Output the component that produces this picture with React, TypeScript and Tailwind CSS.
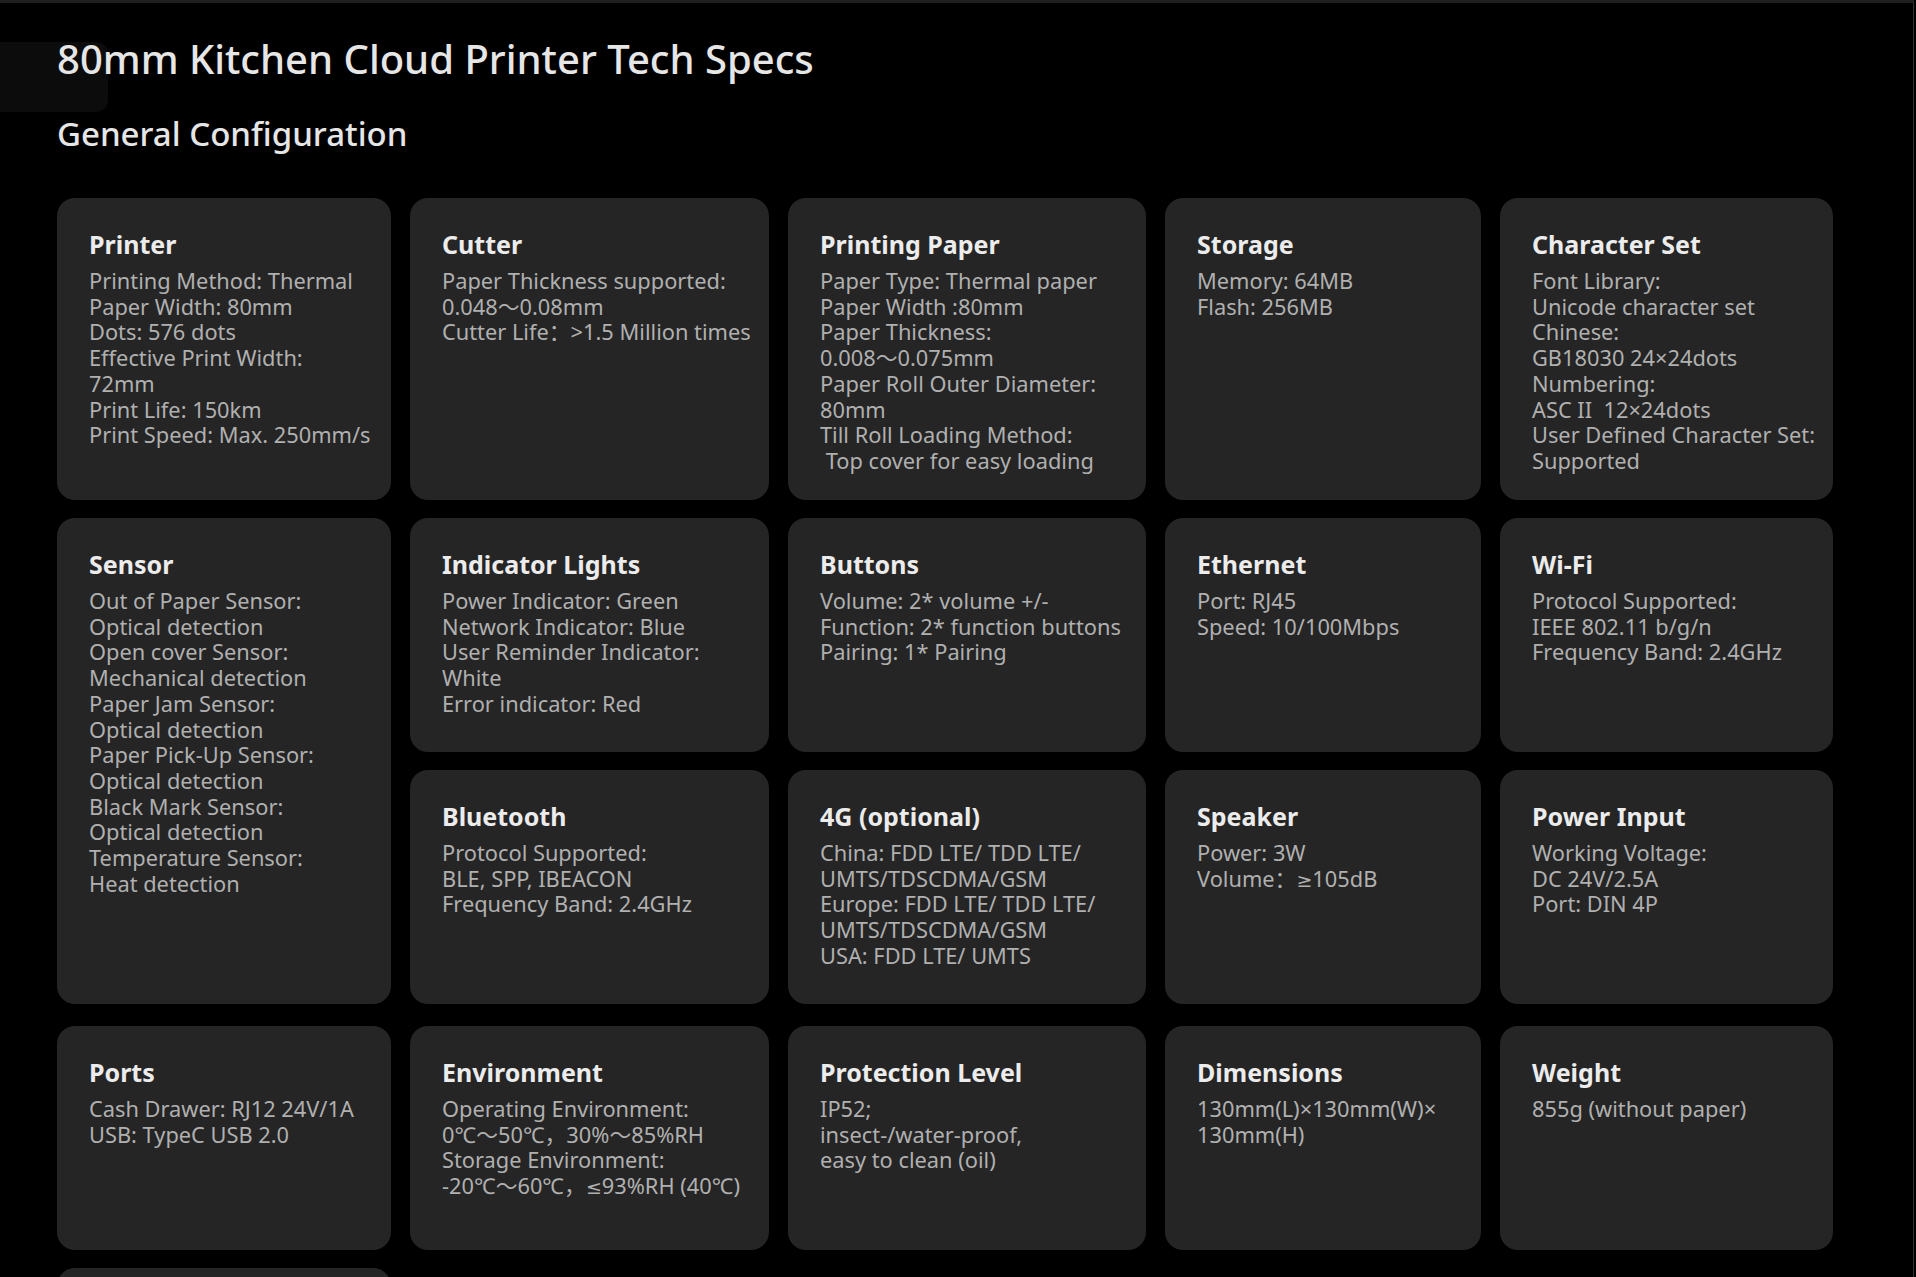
type Spec = {
  title: string;
  lines: string[];
  className?: string;
};

// Cards in grid order; Sensor spans two rows in the first column
const specs: Spec[] = [
  {
    title: 'Printer',
    lines: [
      'Printing Method: Thermal',
      'Paper Width: 80mm',
      'Dots: 576 dots',
      'Effective Print Width:',
      '72mm',
      'Print Life: 150km',
      'Print Speed: Max. 250mm/s',
    ],
  },
  {
    title: 'Cutter',
    lines: ['Paper Thickness supported:', '0.048～0.08mm', 'Cutter Life：>1.5 Million times'],
  },
  {
    title: 'Printing Paper',
    lines: [
      'Paper Type: Thermal paper',
      'Paper Width :80mm',
      'Paper Thickness:',
      '0.008～0.075mm',
      'Paper Roll Outer Diameter:',
      '80mm',
      'Till Roll Loading Method:',
      '\u00a0Top cover for easy loading',
    ],
  },
  { title: 'Storage', lines: ['Memory: 64MB', 'Flash: 256MB'] },
  {
    title: 'Character Set',
    lines: [
      'Font Library:',
      'Unicode character set',
      'Chinese:',
      'GB18030 24×24dots',
      'Numbering:',
      'ASC II\u00a0 12×24dots',
      'User Defined Character Set:',
      'Supported',
    ],
  },
  {
    title: 'Sensor',
    className: 'row-span-2',
    lines: [
      'Out of Paper Sensor:',
      'Optical detection',
      'Open cover Sensor:',
      'Mechanical detection',
      'Paper Jam Sensor:',
      'Optical detection',
      'Paper Pick-Up Sensor:',
      'Optical detection',
      'Black Mark Sensor:',
      'Optical detection',
      'Temperature Sensor:',
      'Heat detection',
    ],
  },
  {
    title: 'Indicator Lights',
    lines: [
      'Power Indicator: Green',
      'Network Indicator: Blue',
      'User Reminder Indicator:',
      'White',
      'Error indicator: Red',
    ],
  },
  {
    title: 'Buttons',
    lines: ['Volume: 2* volume +/-', 'Function: 2* function buttons', 'Pairing: 1* Pairing'],
  },
  { title: 'Ethernet', lines: ['Port: RJ45', 'Speed: 10/100Mbps'] },
  {
    title: 'Wi-Fi',
    lines: ['Protocol Supported:', 'IEEE 802.11 b/g/n', 'Frequency Band: 2.4GHz'],
  },
  {
    title: 'Bluetooth',
    lines: ['Protocol Supported:', 'BLE, SPP, IBEACON', 'Frequency Band: 2.4GHz'],
  },
  {
    title: '4G (optional)',
    lines: [
      'China: FDD LTE/ TDD LTE/',
      'UMTS/TDSCDMA/GSM',
      'Europe: FDD LTE/ TDD LTE/',
      'UMTS/TDSCDMA/GSM',
      'USA: FDD LTE/ UMTS',
    ],
  },
  { title: 'Speaker', lines: ['Power: 3W', 'Volume：≥105dB'] },
  {
    title: 'Power Input',
    lines: ['Working Voltage:', 'DC 24V/2.5A', 'Port: DIN 4P'],
  },
  {
    title: 'Ports',
    className: 'mt-[4px]',
    lines: ['Cash Drawer: RJ12 24V/1A', 'USB: TypeC USB 2.0'],
  },
  {
    title: 'Environment',
    className: 'mt-[4px]',
    lines: [
      'Operating Environment:',
      '0℃～50℃，30%～85%RH',
      'Storage Environment:',
      '-20℃～60℃，≤93%RH (40℃)',
    ],
  },
  {
    title: 'Protection Level',
    className: 'mt-[4px]',
    lines: ['IP52;', 'insect-/water-proof,', 'easy to clean (oil)'],
  },
  {
    title: 'Dimensions',
    className: 'mt-[4px]',
    lines: ['130mm(L)×130mm(W)×', '130mm(H)'],
  },
  { title: 'Weight', className: 'mt-[4px]', lines: ['855g (without paper)'] },
  // next row only peeks in at the bottom edge
  { title: '', lines: [] },
];

// ≥ / ≤ fall back to the CJK face otherwise, which draws them slanted
function SpecLine({ text }: { text: string }) {
  const parts = text.split(/([≥≤])/);
  return (
    <p className="whitespace-pre">
      {parts.map((part, i) =>
        part === '≥' || part === '≤' ? (
          <span key={i} style={{ fontFamily: '"DejaVu Sans", sans-serif' }} className="text-[19px]">
            {part}
          </span>
        ) : (
          part
        )
      )}
    </p>
  );
}

function SpecCard({ spec }: { spec: Spec }) {
  return (
    <div className={`rounded-[18px] bg-[#252525] px-8 pt-[30px] ${spec.className ?? ''}`}>
      {spec.title && (
        <h3 className="text-[25px] leading-[32px] font-bold text-[#ececec]">{spec.title}</h3>
      )}
      <div className="mt-[8px] text-[21.8px] leading-[25.7px] text-[#b0b0b0]">
        {spec.lines.map((line, i) => (
          <SpecLine key={i} text={line} />
        ))}
      </div>
    </div>
  );
}

export default function App() {
  return (
    <div className="min-h-screen bg-black" style={{ fontFamily: '"Noto Sans", "Noto Sans CJK SC", sans-serif' }}>
      <div className="relative w-[1914px] border-t-[3px] border-r border-t-[#1f1f1f] border-r-[#343434] pb-10">
        {/* faint floating tab behind the heading */}
        <div className="absolute left-0 top-[39px] h-[70px] w-[108px] rounded-r-[12px] bg-[#0c0c0c]" />

        <div className="relative pl-[57px] pt-[32px]">
          <h1 className="text-[40px] leading-[48px] font-medium text-[#e6e6e6]">
            80mm Kitchen Cloud Printer Tech Specs
          </h1>
          <h2 className="mt-[31px] text-[33px] leading-[40px] font-medium text-[#e6e6e6]">
            General Configuration
          </h2>

          <div className="mt-[44px] grid grid-cols-[334px_359px_358px_316px_333px] grid-rows-[302px_234px_234px_228px_200px] gap-x-[19px] gap-y-[18px]">
            {specs.map((spec, i) => (
              <SpecCard key={i} spec={spec} />
            ))}
          </div>
        </div>
      </div>
    </div>
  );
}
